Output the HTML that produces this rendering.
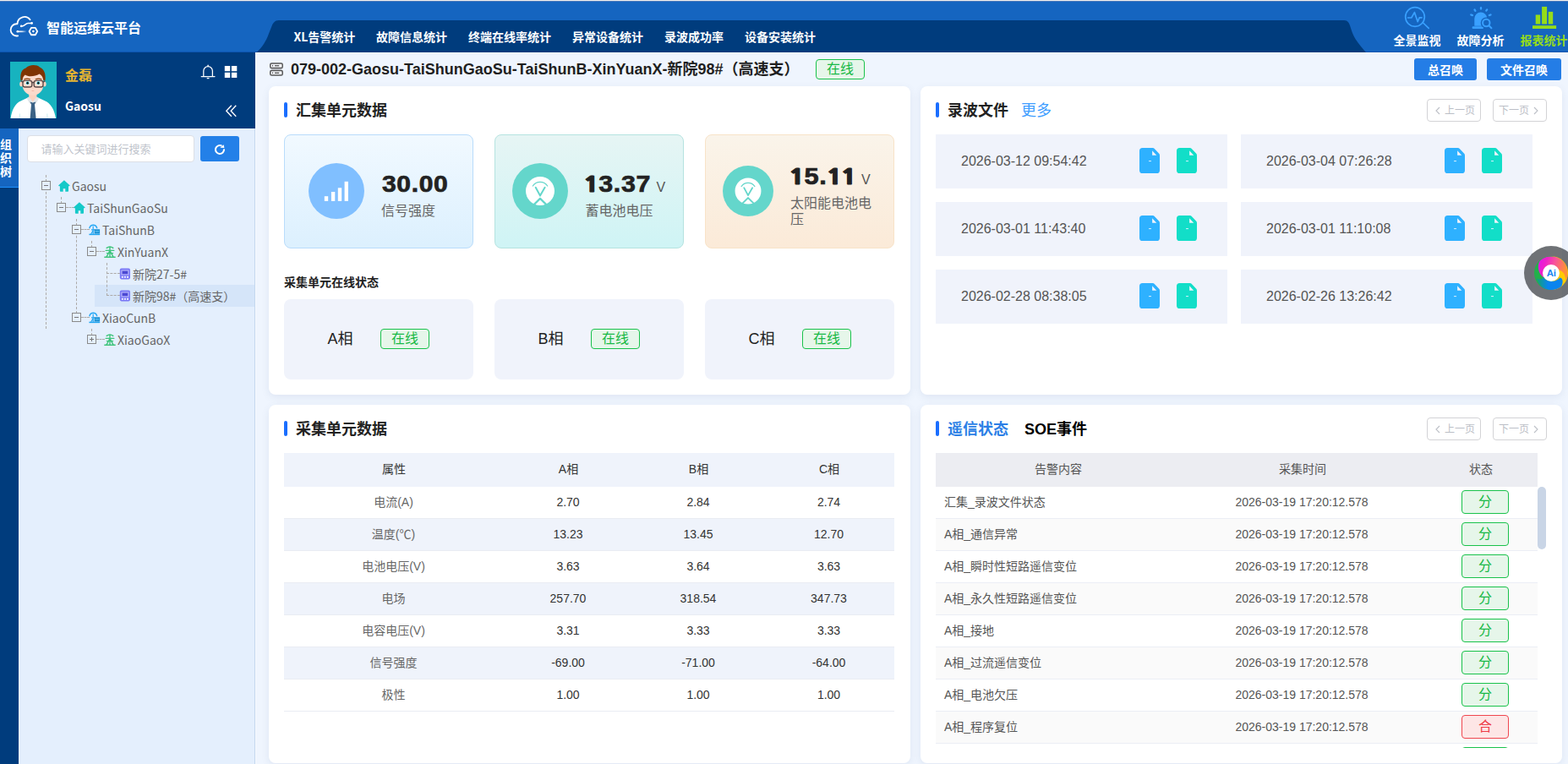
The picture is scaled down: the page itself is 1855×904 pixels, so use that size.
<!DOCTYPE html>
<html lang="zh-CN">
<head>
<meta charset="utf-8">
<title>智能运维云平台</title>
<style>
*{box-sizing:border-box;margin:0;padding:0}
html,body{width:1855px;height:904px;overflow:hidden}
body{position:relative;background:#eff5fe;font-family:"Liberation Sans","Noto Sans CJK SC",sans-serif;font-size:14px;color:#333}
.abs{position:absolute}
.cjk{font-family:"Noto Sans CJK SC","Liberation Sans",sans-serif}
.t{position:absolute;white-space:nowrap;line-height:20px;height:20px}
/* header */
#hdr{position:absolute;left:0;top:0;width:1855px;height:62px;background:#1565c0}
#hdr .topline{position:absolute;left:0;top:0;width:100%;height:2px;background:linear-gradient(#f4f2f0 0,#f4f2f0 1px,#6f93c6 1px,#2a62b0 2px)}
#hdr .botline{position:absolute;left:0;bottom:0;width:100%;height:1px;background:#0d55b0}
.nav{position:absolute;top:33px;height:20px;line-height:20px;font-weight:bold;font-size:14px;color:#fff;white-space:nowrap;font-family:"Noto Sans CJK SC","Liberation Sans",sans-serif}
.rnav{position:absolute;top:37px;height:20px;line-height:20px;font-weight:bold;font-size:14px;color:#fff;white-space:nowrap;width:56px;text-align:left;font-family:"Noto Sans CJK SC","Liberation Sans",sans-serif}
/* sidebar */
#user{position:absolute;left:0;top:62px;width:302px;height:90px;background:#003c7d}
#strip{position:absolute;left:0;top:152px;width:22px;height:752px;background:#003c7d}
#tab{position:absolute;left:0;top:152px;width:22px;height:70px;background:#1565c0;border-bottom:1px solid #1e90ff}
#tab span{position:absolute;left:0;margin-top:-2px;width:14px;text-align:center;font-weight:bold;font-size:14px;line-height:16px;color:#fff;font-family:"Noto Sans CJK SC",sans-serif}
#tree{position:absolute;left:22px;top:152px;width:280px;height:752px;background:#e4effd;border-right:1px solid #c4d7ee}
.tn{position:absolute;margin-top:-1px;height:20px;line-height:20px;font-size:14px;color:#666;white-space:nowrap;font-family:"Noto Sans CJK SC","Liberation Sans",sans-serif}
.bx{position:absolute;width:11px;height:11px;border:1px solid #8a8a8a;background:#e4effd}
.bx:before{content:"";position:absolute;left:2px;top:4px;width:5px;height:1px;background:#777}
.bx.plus:after{content:"";position:absolute;left:4px;top:2px;width:1px;height:5px;background:#777}
.vl{position:absolute;width:0;border-left:1px dashed #adaaa8}
.hl{position:absolute;height:0;border-top:1px dashed #adaaa8}
/* main */
#main{position:absolute;left:302px;top:62px;width:1553px;height:842px;background:#eff5fe;border-top:1px solid #fff;border-left:1px solid #f7faff}
.card{position:absolute;background:#fff;border-radius:8px;box-shadow:0 3px 10px rgba(90,110,155,.11)}
.bar{position:absolute;width:4px;height:18px;border-radius:2px;background:#1a6eff}
.ct{position:absolute;margin-top:1px;font-size:18px;font-weight:bold;line-height:26px;height:26px;color:#222;white-space:nowrap}
.tag{position:absolute;border:1px solid #19c24b;background:#e6f6ea;color:#19b946;border-radius:4px;text-align:center;white-space:nowrap}
.tag.red{border-color:#f0464f;background:#fde6e6;color:#ee3b45}
.btn{position:absolute;height:26px;line-height:26px;background:#247de6;color:#fff;font-weight:bold;font-size:14px;text-align:center;border-radius:3px;font-family:"Noto Sans CJK SC",sans-serif}
.pg{position:absolute;width:64px;height:27px;border:1px solid #d3d3d6;border-radius:4px;background:#fff;color:#bbbec6;font-size:12px;line-height:27px;white-space:nowrap}
.sc{position:absolute;width:224px;height:135px;border-radius:8px;border:1px solid}
.big{position:absolute;font-family:"Liberation Sans",sans-serif;font-weight:bold;font-size:27px;line-height:30px;height:30px;color:#222;white-space:nowrap;transform:scaleX(1.09);transform-origin:0 50%;-webkit-text-stroke:0.7px #222;letter-spacing:0.6px}
.big i{display:inline-block;width:15.3px;text-align:center;font-style:normal;font-family:"NanumGothic","Liberation Sans",sans-serif;font-weight:800;font-size:23.7px;line-height:30px;-webkit-text-stroke:1px #222;letter-spacing:0;transform:scaleX(1.22);vertical-align:baseline}
.unit{position:absolute;font-size:16px;line-height:20px;color:#555;font-family:"Liberation Sans",sans-serif}
.lab{position:absolute;font-size:16px;line-height:19px;color:#666}
.st{position:absolute;width:224px;height:95px;border-radius:8px;background:#f0f3fb}
.ph{position:absolute;font-size:18px;line-height:24px;height:24px;color:#222;white-space:nowrap}
.fr{position:absolute;width:345px;height:64px;background:#f0f3fb}
.fr .d{position:absolute;left:30px;top:21px;line-height:22px;height:22px;font-size:16px;color:#555;white-space:nowrap}
.fr svg{position:absolute;top:16px}
.th{position:absolute;height:40px;line-height:38px;font-size:14px;color:#333;text-align:center;white-space:nowrap}
.tr{position:absolute;height:38px;border-bottom:1px solid #e9ecf3}
.td{position:absolute;top:0;height:37px;line-height:37px;font-size:14px;text-align:center;white-space:nowrap;color:#333}
</style>
</head>
<body>
<div id="hdr">
  <div class="botline"></div>
  <svg class="abs" style="left:0;top:0" width="1855" height="62" viewBox="0 0 1855 62">
    <path d="M303 62 C307 59 311 54.5 315.2 46.4 C317 43 320 34.5 321.5 30.9 C323 27.4 325 24 329.8 24 L1590 24 C1594.5 24 1596.3 27.5 1597.3 31 C1598.5 35 1600.5 41 1602.6 44.5 C1605.5 49.5 1609.5 54.5 1616 62 Z" fill="#003c7d"/>
  </svg>
  <div class="topline"></div>
  <!-- logo -->
  <svg class="abs" style="left:5px;top:10px" width="50" height="45" viewBox="5 10 50 45" fill="none" stroke="#fff" stroke-width="1.8" stroke-linecap="round" stroke-linejoin="round">
    <defs><linearGradient id="lg1" x1="0" y1="0" x2="1" y2="0"><stop offset="0" stop-color="#fff"/><stop offset="0.5" stop-color="#fff" stop-opacity=".85"/><stop offset="1" stop-color="#fff" stop-opacity="0"/></linearGradient></defs>
    <path d="M20.6 27.6 A8.4 8.4 0 0 1 35.6 23.3"/>
    <path d="M20.4 28.3 A7.1 7.1 0 1 0 21.2 42.3"/>
    <path d="M25.2 30.9 C29 31.6 30 27.6 33 27.4 L37.6 27.4" stroke-width="1.5"/>
    <circle cx="25.2" cy="30.9" r="1.3" fill="#fff" stroke="none"/>
    <circle cx="37.6" cy="27.4" r="1.4" fill="#fff" stroke="none"/>
    <rect x="20.5" y="36.5" width="11" height="1.7" fill="url(#lg1)" stroke="none"/>
    <circle cx="20.8" cy="37.3" r="1.3" fill="#fff" stroke="none"/>
    <path d="M34.6 37.1 L37 32.9 L41.8 32.9 L44.2 37.1 L41.8 41.3 L37 41.3 Z" stroke-width="1.9"/>
    <circle cx="39.4" cy="37.1" r="1.3" fill="#fff" stroke="none"/>
  </svg>
  <div class="t cjk" style="left:55px;top:22px;font-size:16px;font-weight:bold;color:#fff">智能运维云平台</div>
  <!-- nav -->
  <div class="nav" style="left:347.5px">XL告警统计</div>
  <div class="nav" style="left:445px">故障信息统计</div>
  <div class="nav" style="left:554px">终端在线率统计</div>
  <div class="nav" style="left:677px">异常设备统计</div>
  <div class="nav" style="left:786px">录波成功率</div>
  <div class="nav" style="left:881px">设备安装统计</div>
  <!-- right icons -->
  <svg class="abs" style="left:1655px;top:2px" width="200" height="36" viewBox="1655 2 200 36">
    <g fill="none" stroke="#39a0ff" stroke-width="1.7" stroke-linecap="round" stroke-linejoin="round">
      <circle cx="1674" cy="20" r="11.3"/>
      <path d="M1683.6 27 L1690.2 33.4" stroke-width="1.7"/>
      <path d="M1665.6 21 L1669.8 21 L1673.4 14.6 L1677.2 25.6 L1679.2 20.8 L1682 20.8"/>
    </g>
    <g fill="#39a0ff">
      <path d="M1744.3 30.8 L1744.3 22 A7.5 7.5 0 0 1 1759.3 22 L1759.3 30.8 Z"/>
      <rect x="1741.6" y="31.2" width="13.4" height="2.9" rx="1"/>
      <g stroke="#39a0ff" stroke-width="2.3" stroke-linecap="round" fill="none">
        <path d="M1740.3 17.5 L1741.9 18.1"/><path d="M1744.5 11.5 L1745.4 12.8"/><path d="M1752 9.2 L1752 10.6"/><path d="M1759.2 11.4 L1758.3 12.6"/><path d="M1763.5 17.5 L1761.9 18.1"/>
      </g>
      <circle cx="1758.3" cy="27" r="6.6" fill="#1565c0"/>
      <circle cx="1758.3" cy="27" r="4.2" fill="none" stroke="#39a0ff" stroke-width="2"/>
      <path d="M1761.4 30.2 L1764.4 33.2" stroke="#39a0ff" stroke-width="2" stroke-linecap="round"/>
    </g>
    <g fill="#96dc19">
      <rect x="1813" y="30.2" width="28.1" height="3.8"/>
      <rect x="1816.7" y="17.5" width="5.5" height="11"/>
      <rect x="1824.1" y="7.9" width="6" height="20.6"/>
      <rect x="1831.8" y="13.9" width="5.4" height="14.6"/>
    </g>
  </svg>
  <div class="rnav" style="left:1648.5px">全景监视</div>
  <div class="rnav" style="left:1723.5px">故障分析</div>
  <div class="rnav" style="left:1798.5px;color:#96dc19">报表统计</div>
</div>
<div id="user">
  <svg class="abs" style="left:12px;top:11px" width="55" height="67" viewBox="0 0 55 67">
    <rect width="55" height="67" fill="#17b3bf"/>
    <!-- shirt -->
    <path d="M0.6 67 C2 57 6 49 13 46.2 L21 42.6 L33 42.6 L41 46.2 C48 49 52.5 57 54 67 Z" fill="#fff"/>
    <path d="M11.2 67 L11.4 61.5" stroke="#bfe9ec" stroke-width="0.8" fill="none"/>
    <path d="M44 67 L43.8 61.5" stroke="#bfe9ec" stroke-width="0.8" fill="none"/>
    <!-- neck -->
    <path d="M22.2 36 L31.4 36 L31.4 42.6 L26.8 48 L22.2 42.6 Z" fill="#fbd3c1"/>
    <!-- collar -->
    <path d="M19.6 43.2 L22.2 41.4 L26.8 47.6 L23.4 50 Z" fill="#e2e7ea"/>
    <path d="M34.2 43.2 L31.4 41.4 L26.8 47.6 L30.4 50 Z" fill="#e2e7ea"/>
    <!-- tie -->
    <path d="M23.4 47.4 L26.8 48.6 L30.4 47.4 L29 50.6 L30.6 67 L23.6 67 L25 50.6 Z" fill="#3b6286"/>
    <!-- ears -->
    <ellipse cx="13.2" cy="26.4" rx="2" ry="3" fill="#fbd3c1"/>
    <ellipse cx="40.6" cy="26.4" rx="2" ry="3" fill="#fbd3c1"/>
    <!-- face -->
    <path d="M14.6 13 L39.2 13 L39.2 28 C39.2 35 33 39.8 26.9 39.8 C20.8 39.8 14.6 35 14.6 28 Z" fill="#fcdacb"/>
    <!-- hair -->
    <path d="M12.6 22.8 C11.4 14 14 9 18.6 7.6 C22 3.4 31 2.8 35 6.4 C40 8.4 42.6 14 41.4 22.8 L39.2 21.6 C38.8 18.4 37.2 15.8 34.6 14.6 C29 17.8 21 18 17.8 15.4 C15.8 16.8 14.8 19 14.6 21.6 Z" fill="#7f3402"/>
    <!-- brows -->
    <path d="M16.6 21 C18.6 20 21.6 20 23.6 20.8" stroke="#8a3a08" stroke-width="1.1" fill="none" stroke-linecap="round"/>
    <path d="M30.2 20.8 C32.2 20 35.2 20 37.2 21" stroke="#8a3a08" stroke-width="1.1" fill="none" stroke-linecap="round"/>
    <!-- eyes -->
    <ellipse cx="20.5" cy="25.2" rx="2.7" ry="2.3" fill="#fff"/>
    <ellipse cx="33.4" cy="25.2" rx="2.7" ry="2.3" fill="#fff"/>
    <circle cx="20.6" cy="25.2" r="1.9" fill="#2fc3d6"/>
    <circle cx="33.3" cy="25.2" r="1.9" fill="#2fc3d6"/>
    <circle cx="20.6" cy="25.2" r="1.2" fill="#111"/>
    <circle cx="33.3" cy="25.2" r="1.2" fill="#111"/>
    <!-- glasses -->
    <g fill="none" stroke="#5c4a49" stroke-width="1.4">
      <rect x="15" y="22.4" width="10.8" height="7.6" rx="2.6"/>
      <rect x="28.2" y="22.4" width="10.8" height="7.6" rx="2.6"/>
      <path d="M25.8 25 C26.6 24.4 27.4 24.4 28.2 25"/>
      <path d="M15 24 L12.8 23.2"/><path d="M39 24 L41.2 23.2"/>
    </g>
    <!-- nose mouth -->
    <path d="M26.2 31.2 C26.6 31.6 27.2 31.6 27.6 31.2" stroke="#f0b8a4" stroke-width="0.7" fill="none"/>
    <path d="M25 34.2 C26 35.2 27.8 35.2 28.8 34.2 Z" fill="#eea693"/>
  </svg>
  <div class="t cjk" style="left:77px;top:15px;font-size:16px;font-weight:bold;color:#e6b430;line-height:22px;height:22px">金磊</div>
  <div class="t cjk" style="left:77px;top:53px;font-size:14px;font-weight:bold;color:#fff">Gaosu</div>
  <svg class="abs" style="left:236px;top:12px" width="48" height="22" viewBox="236 74 48 22">
    <g fill="none" stroke="#fff" stroke-width="1.25" stroke-linecap="round" stroke-linejoin="round">
      <path d="M240.8 90.4 L240.8 84 A5.3 5.3 0 0 1 251.4 84 L251.4 90.4"/>
      <path d="M238.2 90.5 L254 90.5"/>
      <path d="M246.1 77.2 L246.1 78.6"/>
      <path d="M245.2 92.7 L247 92.7"/>
    </g>
    <g fill="#fff"><rect x="265.8" y="78" width="6.4" height="6.2"/><rect x="273.9" y="78" width="6.4" height="6.2"/><rect x="265.8" y="85.8" width="6.4" height="6.2"/><rect x="273.9" y="85.8" width="6.4" height="6.2"/></g>
  </svg>
  <svg class="abs" style="left:264px;top:60px" width="20" height="18" viewBox="264 122 20 18">
    <g fill="none" stroke="#fff" stroke-width="1.35" stroke-linecap="square" stroke-linejoin="miter">
      <path d="M273.4 125.2 L267.8 131.2 L273.4 137.2"/>
      <path d="M278.8 125.2 L273.2 131.2 L278.8 137.2"/>
    </g>
  </svg>
</div>
<div id="strip"></div>
<div id="tab"><span style="top:12px">组</span><span style="top:28px">织</span><span style="top:44px">树</span></div>
<div id="tree">
  <!-- coordinates inside tree are page coords minus (22,152) -->
  <div class="abs" style="left:10px;top:8px;width:198px;height:32px;border:1px solid #dcdfe6;border-radius:4px;background:#fff"></div>
  <div class="abs cjk" style="left:26.5px;top:9px;height:30px;line-height:30px;font-size:13px;color:#c0c4cc;white-space:nowrap">请输入关键词进行搜索</div>
  <div class="abs" style="left:215px;top:9px;width:46px;height:30px;border-radius:3px;background:#2380e8"></div>
  <svg class="abs" style="left:230.9px;top:17.9px" width="14" height="14" viewBox="-7 -7 14 14"><path d="M4.96 -0.6 A5 5 0 1 1 2.5 -4.33" fill="none" stroke="#fff" stroke-width="2.05" stroke-linecap="butt"/><path d="M0.4 -2.3 L5.4 -2 L4.7 -5.7 Z" fill="#fff"/></svg>
  <div class="abs" style="left:90px;top:185px;width:189px;height:26px;background:#d5e5f9"></div>
  <!-- lines -->
  <div class="vl" style="left:32px;top:55px;height:182px"></div>
  <div class="vl" style="left:50px;top:81px;height:8px"></div>
  <div class="vl" style="left:68px;top:107px;height:112px"></div>
  <div class="vl" style="left:86px;top:133px;height:8px"></div>
  <div class="vl" style="left:86px;top:237px;height:8px"></div>
  <div class="vl" style="left:104px;top:159px;height:39px"></div>
  <div class="hl" style="left:56px;top:93px;width:10px"></div>
  <div class="hl" style="left:74px;top:119px;width:10px"></div>
  <div class="hl" style="left:92px;top:145px;width:10px"></div>
  <div class="hl" style="left:74px;top:223px;width:10px"></div>
  <div class="hl" style="left:92px;top:249px;width:10px"></div>
  <div class="hl" style="left:104px;top:171px;width:16px"></div>
  <div class="hl" style="left:104px;top:197px;width:16px"></div>
  <!-- boxes -->
  <div class="bx" style="left:27px;top:62px"></div>
  <div class="bx" style="left:45px;top:88px"></div>
  <div class="bx" style="left:63px;top:114px"></div>
  <div class="bx" style="left:81px;top:140px"></div>
  <div class="bx" style="left:63px;top:218px"></div>
  <div class="bx plus" style="left:81px;top:244px"></div>
  <!-- icons -->
  <svg class="abs" style="left:47px;top:61px" width="14" height="14" viewBox="0 0 14 14"><use href="#i-home"/></svg>
  <svg class="abs" style="left:65px;top:87px" width="14" height="14" viewBox="0 0 14 14"><use href="#i-home"/></svg>
  <svg class="abs" style="left:83px;top:113px" width="14" height="14" viewBox="0 0 14 14"><use href="#i-stn"/></svg>
  <svg class="abs" style="left:101px;top:139px" width="14" height="14" viewBox="0 0 14 14"><use href="#i-twr"/></svg>
  <svg class="abs" style="left:119px;top:165px" width="14" height="14" viewBox="0 0 14 14"><use href="#i-dev"/></svg>
  <svg class="abs" style="left:119px;top:191px" width="14" height="14" viewBox="0 0 14 14"><use href="#i-dev"/></svg>
  <svg class="abs" style="left:83px;top:217px" width="14" height="14" viewBox="0 0 14 14"><use href="#i-stn"/></svg>
  <svg class="abs" style="left:101px;top:243px" width="14" height="14" viewBox="0 0 14 14"><use href="#i-twr"/></svg>
  <!-- labels -->
  <div class="tn" style="left:63px;top:59px">Gaosu</div>
  <div class="tn" style="left:81px;top:85px">TaiShunGaoSu</div>
  <div class="tn" style="left:99px;top:111px">TaiShunB</div>
  <div class="tn" style="left:117px;top:137px">XinYuanX</div>
  <div class="tn" style="left:135px;top:163px">新院27-5#</div>
  <div class="tn" style="left:135px;top:189px">新院98#（高速支）</div>
  <div class="tn" style="left:99px;top:215px">XiaoCunB</div>
  <div class="tn" style="left:117px;top:241px">XiaoGaoX</div>
</div>
<svg width="0" height="0" style="position:absolute">
  <defs>
    <g id="i-home"><path d="M6.9 0.2 L13.5 6.3 Q13.9 7.2 12.8 7.2 L12 7.2 L12 13 Q12 13.8 11.2 13.8 L8.3 13.8 L8.3 10.2 L5.7 10.2 L5.7 13.8 L2.7 13.8 Q1.9 13.8 1.9 13 L1.9 7.2 L1 7.2 Q-0.1 7.2 0.3 6.3 Z" fill="#14c9c8"/></g>
    <g id="i-stn"><path d="M0.4 12.4 L13.2 12.4" stroke="#1fa5f2" stroke-width="1.5" fill="none"/><path d="M1 4.6 C1.6 2.4 3.4 1.2 5.3 1.2 C7.2 1.2 9 2.4 9.6 4.6" stroke="#29a9f5" stroke-width="1.6" fill="none" stroke-linecap="round"/><path d="M5.2 2.6 L5.2 12 M3 6.8 L7.4 6.8 M5.2 7.6 L2.6 12" stroke="#29a9f5" stroke-width="1.2" fill="none"/><rect x="6.6" y="6.3" width="6.5" height="5.2" fill="#1a8fd2"/><rect x="7.6" y="8.2" width="4.6" height="1.2" fill="#5fc4f7"/></g>
    <g id="i-twr"><path d="M3.2 2.4 C5.4 0.8 8.6 0.8 10.8 2.4 M2.2 5.4 L11.8 5.4 M3.4 8.6 L10.6 8.6 M0.8 13.2 L13.2 13.2 M7 1.6 L7 13 M7 5.6 L3 12.8 M7 5.6 L11 12.8" stroke="#3fc47c" stroke-width="1.4" fill="none" stroke-linecap="round"/></g>
    <g id="i-dev"><rect x="0.8" y="0.6" width="12.2" height="12.8" rx="1.8" fill="#7a78f6"/><rect x="2.2" y="2.2" width="9.4" height="6.4" rx="1.2" fill="#aeadf9"/><rect x="3.6" y="3.6" width="6.6" height="3.6" fill="#4b48d2"/><rect x="2.8" y="9.8" width="2" height="2" fill="#f0f0ff"/><rect x="5.9" y="9.8" width="2" height="2" fill="#f0f0ff"/><rect x="9" y="9.8" width="2" height="2" fill="#f0f0ff"/></g>
  </defs>
</svg>
<div id="main"></div>
<svg class="abs" style="left:317px;top:72px" width="20" height="20" viewBox="317 72 20 20">
<rect x="320.5" y="80" width="13" height="4" fill="#cfd3db"/>
<g fill="#f6f8fc" stroke="#555" stroke-width="1.5"><rect x="319.8" y="74.9" width="14.4" height="5.6" rx="1.6"/><rect x="319.8" y="83.5" width="14.4" height="5.6" rx="1.6"/></g>
<g fill="#555"><rect x="322" y="76.9" width="1.1" height="1.6"/><rect x="325" y="77.1" width="5.2" height="1.3"/><rect x="322" y="85.5" width="1.1" height="1.6"/><rect x="325" y="85.7" width="5.2" height="1.3"/></g>
</svg>
<div class="t" style="left:344px;top:69px;height:26px;line-height:26px;font-size:18px;font-weight:bold;color:#1f1f1f">079-002-Gaosu-TaiShunGaoSu-TaiShunB-XinYuanX-新院98#（高速支）</div>
<div class="tag" style="left:965px;top:70px;width:58px;height:24px;line-height:22px;font-size:16px">在线</div>
<div class="btn" style="left:1673px;top:69px;width:74px">总召唤</div>
<div class="btn" style="left:1759px;top:69px;width:88px">文件召唤</div>
<div class="card" style="left:318px;top:102px;width:759px;height:365px"></div>
<div class="card" style="left:1089px;top:102px;width:759px;height:365px"></div>
<div class="card" style="left:318px;top:479px;width:759px;height:424px"></div>
<div class="card" style="left:1089px;top:479px;width:759px;height:424px"></div>
<div class="bar" style="left:336px;top:121px"></div>
<div class="ct" style="left:350px;top:117px">汇集单元数据</div>
<div class="sc" style="left:336px;top:159px;border-color:#b9dcfb;background:linear-gradient(#f1f9ff,#dcf0fe)"></div>
<svg class="abs" style="left:365px;top:193px" width="66" height="66" viewBox="-33 -33 66 66"><circle r="33" fill="#80bfff"/><g fill="#fff"><rect x="-14.2" y="6.2" width="4.4" height="5.7"/><rect x="-6.1" y="1" width="4.4" height="10.9"/><rect x="1.8" y="-3.7" width="4.4" height="15.6"/><rect x="9.6" y="-11.2" width="4.3" height="23.1"/></g></svg>
<div class="big" style="left:451.5px;top:202.5px;transform:scaleX(1.11)">30.00</div>
<div class="lab" style="left:451px;top:240px">信号强度</div>
<div class="sc" style="left:585px;top:159px;border-color:#b5e3e0;background:linear-gradient(#e6f5f4,#cff4f5)"></div>
<svg class="abs" style="left:606px;top:193px" width="66" height="66" viewBox="-33 -33 66 66"><circle r="33" fill="#64d6cb"/><circle r="17" fill="#fff"/><g fill="none" stroke="#64d6cb" stroke-linecap="round" stroke-linejoin="round"><path d="M-8.7 -6 A10.6 10.6 0 0 1 8.7 -6" stroke-width="1.3"/><path d="M-5.3 -4.2 L0 5.6 L5.6 -4.2" stroke-width="2"/><path d="M-7.6 16.4 L0 8.9 L7.6 16.4" stroke-width="2.2"/></g></svg>
<div class="big" style="left:691px;top:202.5px;transform:scaleX(1.125)"><i>1</i>3.37</div>
<div class="unit" style="left:776.5px;top:212px">V</div>
<div class="lab" style="left:692.5px;top:240px">蓄电池电压</div>
<div class="sc" style="left:834px;top:159px;border-color:#f8e3c8;background:linear-gradient(#faf4ea,#fbead8)"></div>
<svg class="abs" style="left:855px;top:196px" width="60" height="60" viewBox="-33 -33 66 66"><circle r="33" fill="#64d6cb"/><circle r="17" fill="#fff"/><g fill="none" stroke="#64d6cb" stroke-linecap="round" stroke-linejoin="round"><path d="M-8.7 -6 A10.6 10.6 0 0 1 8.7 -6" stroke-width="1.3"/><path d="M-5.3 -4.2 L0 5.6 L5.6 -4.2" stroke-width="2"/><path d="M-7.6 16.4 L0 8.9 L7.6 16.4" stroke-width="2.2"/></g></svg>
<div class="big" style="left:933.5px;top:193.5px;transform:scaleX(1.14)"><i>1</i>5.<i>1</i><i>1</i></div>
<div class="unit" style="left:1019px;top:203px">V</div>
<div class="lab" style="left:935px;top:231px;width:96px">太阳能电池电压</div>
<div class="t" style="left:336px;top:324px;font-size:14px;font-weight:bold;color:#222">采集单元在线状态</div>
<div class="st" style="left:336px;top:354px"></div>
<div class="ph" style="left:387.5px;top:389px">A相</div>
<div class="tag" style="left:450px;top:389px;width:58px;height:24px;line-height:22px;font-size:16px">在线</div>
<div class="st" style="left:585px;top:354px"></div>
<div class="ph" style="left:636.5px;top:389px">B相</div>
<div class="tag" style="left:699px;top:389px;width:58px;height:24px;line-height:22px;font-size:16px">在线</div>
<div class="st" style="left:834px;top:354px"></div>
<div class="ph" style="left:885.5px;top:389px">C相</div>
<div class="tag" style="left:949px;top:389px;width:58px;height:24px;line-height:22px;font-size:16px">在线</div>
<div class="bar" style="left:1107px;top:121px"></div>
<div class="ct" style="left:1121px;top:117px">录波文件</div>
<div class="ct" style="left:1208px;top:117px;font-weight:normal;color:#409eff">更多</div>
<div class="pg" style="left:1688px;top:117px"><svg class="abs" style="left:8px;top:7px" width="8" height="12" viewBox="0 0 8 12"><path d="M6 2 L2 6 L6 10" fill="none" stroke="#bcbfc6" stroke-width="1.1"/></svg><span class="abs" style="left:20px;top:0">上一页</span></div>
<div class="pg" style="left:1766px;top:117px"><span class="abs" style="left:6px;top:0">下一页</span><svg class="abs" style="left:46px;top:7px" width="8" height="12" viewBox="0 0 8 12"><path d="M2 2 L6 6 L2 10" fill="none" stroke="#bcbfc6" stroke-width="1.1"/></svg></div>
<div class="fr" style="left:1107px;top:159px"><div class="d">2026-03-12 09:54:42</div><svg style="left:241px" width="24" height="30" viewBox="0 0 24 30"><path d="M3.6 0 L15.6 0 C16.6 0 17.2 0.4 17.8 1 L23 6.6 C23.7 7.3 24 8 24 9 L24 26.4 A3.6 3.6 0 0 1 20.4 30 L3.6 30 A3.6 3.6 0 0 1 0 26.4 L0 3.6 A3.6 3.6 0 0 1 3.6 0 Z" fill="#2eb1ff"/><path d="M15.1 3.2 L15.1 8.8 L20.3 8.8 Z" fill="#f0f3fb"/><rect x="11" y="15.1" width="3" height="1" fill="#d8f0ff"/></svg><svg style="left:285px" width="24" height="30" viewBox="0 0 24 30"><path d="M3.6 0 L15.6 0 C16.6 0 17.2 0.4 17.8 1 L23 6.6 C23.7 7.3 24 8 24 9 L24 26.4 A3.6 3.6 0 0 1 20.4 30 L3.6 30 A3.6 3.6 0 0 1 0 26.4 L0 3.6 A3.6 3.6 0 0 1 3.6 0 Z" fill="#12dec8"/><path d="M15.1 3.2 L15.1 8.8 L20.3 8.8 Z" fill="#f0f3fb"/><rect x="11" y="15.1" width="3" height="1" fill="#d8f0ff"/></svg></div>
<div class="fr" style="left:1468px;top:159px"><div class="d">2026-03-04 07:26:28</div><svg style="left:241px" width="24" height="30" viewBox="0 0 24 30"><path d="M3.6 0 L15.6 0 C16.6 0 17.2 0.4 17.8 1 L23 6.6 C23.7 7.3 24 8 24 9 L24 26.4 A3.6 3.6 0 0 1 20.4 30 L3.6 30 A3.6 3.6 0 0 1 0 26.4 L0 3.6 A3.6 3.6 0 0 1 3.6 0 Z" fill="#2eb1ff"/><path d="M15.1 3.2 L15.1 8.8 L20.3 8.8 Z" fill="#f0f3fb"/><rect x="11" y="15.1" width="3" height="1" fill="#d8f0ff"/></svg><svg style="left:285px" width="24" height="30" viewBox="0 0 24 30"><path d="M3.6 0 L15.6 0 C16.6 0 17.2 0.4 17.8 1 L23 6.6 C23.7 7.3 24 8 24 9 L24 26.4 A3.6 3.6 0 0 1 20.4 30 L3.6 30 A3.6 3.6 0 0 1 0 26.4 L0 3.6 A3.6 3.6 0 0 1 3.6 0 Z" fill="#12dec8"/><path d="M15.1 3.2 L15.1 8.8 L20.3 8.8 Z" fill="#f0f3fb"/><rect x="11" y="15.1" width="3" height="1" fill="#d8f0ff"/></svg></div>
<div class="fr" style="left:1107px;top:239px"><div class="d">2026-03-01 11:43:40</div><svg style="left:241px" width="24" height="30" viewBox="0 0 24 30"><path d="M3.6 0 L15.6 0 C16.6 0 17.2 0.4 17.8 1 L23 6.6 C23.7 7.3 24 8 24 9 L24 26.4 A3.6 3.6 0 0 1 20.4 30 L3.6 30 A3.6 3.6 0 0 1 0 26.4 L0 3.6 A3.6 3.6 0 0 1 3.6 0 Z" fill="#2eb1ff"/><path d="M15.1 3.2 L15.1 8.8 L20.3 8.8 Z" fill="#f0f3fb"/><rect x="11" y="15.1" width="3" height="1" fill="#d8f0ff"/></svg><svg style="left:285px" width="24" height="30" viewBox="0 0 24 30"><path d="M3.6 0 L15.6 0 C16.6 0 17.2 0.4 17.8 1 L23 6.6 C23.7 7.3 24 8 24 9 L24 26.4 A3.6 3.6 0 0 1 20.4 30 L3.6 30 A3.6 3.6 0 0 1 0 26.4 L0 3.6 A3.6 3.6 0 0 1 3.6 0 Z" fill="#12dec8"/><path d="M15.1 3.2 L15.1 8.8 L20.3 8.8 Z" fill="#f0f3fb"/><rect x="11" y="15.1" width="3" height="1" fill="#d8f0ff"/></svg></div>
<div class="fr" style="left:1468px;top:239px"><div class="d">2026-03-01 11:10:08</div><svg style="left:241px" width="24" height="30" viewBox="0 0 24 30"><path d="M3.6 0 L15.6 0 C16.6 0 17.2 0.4 17.8 1 L23 6.6 C23.7 7.3 24 8 24 9 L24 26.4 A3.6 3.6 0 0 1 20.4 30 L3.6 30 A3.6 3.6 0 0 1 0 26.4 L0 3.6 A3.6 3.6 0 0 1 3.6 0 Z" fill="#2eb1ff"/><path d="M15.1 3.2 L15.1 8.8 L20.3 8.8 Z" fill="#f0f3fb"/><rect x="11" y="15.1" width="3" height="1" fill="#d8f0ff"/></svg><svg style="left:285px" width="24" height="30" viewBox="0 0 24 30"><path d="M3.6 0 L15.6 0 C16.6 0 17.2 0.4 17.8 1 L23 6.6 C23.7 7.3 24 8 24 9 L24 26.4 A3.6 3.6 0 0 1 20.4 30 L3.6 30 A3.6 3.6 0 0 1 0 26.4 L0 3.6 A3.6 3.6 0 0 1 3.6 0 Z" fill="#12dec8"/><path d="M15.1 3.2 L15.1 8.8 L20.3 8.8 Z" fill="#f0f3fb"/><rect x="11" y="15.1" width="3" height="1" fill="#d8f0ff"/></svg></div>
<div class="fr" style="left:1107px;top:319px"><div class="d">2026-02-28 08:38:05</div><svg style="left:241px" width="24" height="30" viewBox="0 0 24 30"><path d="M3.6 0 L15.6 0 C16.6 0 17.2 0.4 17.8 1 L23 6.6 C23.7 7.3 24 8 24 9 L24 26.4 A3.6 3.6 0 0 1 20.4 30 L3.6 30 A3.6 3.6 0 0 1 0 26.4 L0 3.6 A3.6 3.6 0 0 1 3.6 0 Z" fill="#2eb1ff"/><path d="M15.1 3.2 L15.1 8.8 L20.3 8.8 Z" fill="#f0f3fb"/><rect x="11" y="15.1" width="3" height="1" fill="#d8f0ff"/></svg><svg style="left:285px" width="24" height="30" viewBox="0 0 24 30"><path d="M3.6 0 L15.6 0 C16.6 0 17.2 0.4 17.8 1 L23 6.6 C23.7 7.3 24 8 24 9 L24 26.4 A3.6 3.6 0 0 1 20.4 30 L3.6 30 A3.6 3.6 0 0 1 0 26.4 L0 3.6 A3.6 3.6 0 0 1 3.6 0 Z" fill="#12dec8"/><path d="M15.1 3.2 L15.1 8.8 L20.3 8.8 Z" fill="#f0f3fb"/><rect x="11" y="15.1" width="3" height="1" fill="#d8f0ff"/></svg></div>
<div class="fr" style="left:1468px;top:319px"><div class="d">2026-02-26 13:26:42</div><svg style="left:241px" width="24" height="30" viewBox="0 0 24 30"><path d="M3.6 0 L15.6 0 C16.6 0 17.2 0.4 17.8 1 L23 6.6 C23.7 7.3 24 8 24 9 L24 26.4 A3.6 3.6 0 0 1 20.4 30 L3.6 30 A3.6 3.6 0 0 1 0 26.4 L0 3.6 A3.6 3.6 0 0 1 3.6 0 Z" fill="#2eb1ff"/><path d="M15.1 3.2 L15.1 8.8 L20.3 8.8 Z" fill="#f0f3fb"/><rect x="11" y="15.1" width="3" height="1" fill="#d8f0ff"/></svg><svg style="left:285px" width="24" height="30" viewBox="0 0 24 30"><path d="M3.6 0 L15.6 0 C16.6 0 17.2 0.4 17.8 1 L23 6.6 C23.7 7.3 24 8 24 9 L24 26.4 A3.6 3.6 0 0 1 20.4 30 L3.6 30 A3.6 3.6 0 0 1 0 26.4 L0 3.6 A3.6 3.6 0 0 1 3.6 0 Z" fill="#12dec8"/><path d="M15.1 3.2 L15.1 8.8 L20.3 8.8 Z" fill="#f0f3fb"/><rect x="11" y="15.1" width="3" height="1" fill="#d8f0ff"/></svg></div>
<div class="bar" style="left:336px;top:498px"></div>
<div class="ct" style="left:350px;top:494px">采集单元数据</div>
<div class="abs" style="left:336px;top:536px;width:722px;height:40px;background:#eff3fb"></div>
<div class="th" style="left:336.5px;top:536px;width:259px">属性</div>
<div class="th" style="left:595.5px;top:536px;width:154px">A相</div>
<div class="th" style="left:749.5px;top:536px;width:154px">B相</div>
<div class="th" style="left:903.5px;top:536px;width:155px">C相</div>
<div class="tr" style="left:336px;top:576px;width:722px;background:#fff"><div class="td" style="left:0px;width:259px;color:#666">电流(A)</div><div class="td" style="left:259px;width:154px">2.70</div><div class="td" style="left:413px;width:154px">2.84</div><div class="td" style="left:567px;width:155px">2.74</div></div>
<div class="tr" style="left:336px;top:614px;width:722px;background:#eff3fb"><div class="td" style="left:0px;width:259px;color:#666">温度(℃)</div><div class="td" style="left:259px;width:154px">13.23</div><div class="td" style="left:413px;width:154px">13.45</div><div class="td" style="left:567px;width:155px">12.70</div></div>
<div class="tr" style="left:336px;top:652px;width:722px;background:#fff"><div class="td" style="left:0px;width:259px;color:#666">电池电压(V)</div><div class="td" style="left:259px;width:154px">3.63</div><div class="td" style="left:413px;width:154px">3.64</div><div class="td" style="left:567px;width:155px">3.63</div></div>
<div class="tr" style="left:336px;top:690px;width:722px;background:#eff3fb"><div class="td" style="left:0px;width:259px;color:#666">电场</div><div class="td" style="left:259px;width:154px">257.70</div><div class="td" style="left:413px;width:154px">318.54</div><div class="td" style="left:567px;width:155px">347.73</div></div>
<div class="tr" style="left:336px;top:728px;width:722px;background:#fff"><div class="td" style="left:0px;width:259px;color:#666">电容电压(V)</div><div class="td" style="left:259px;width:154px">3.31</div><div class="td" style="left:413px;width:154px">3.33</div><div class="td" style="left:567px;width:155px">3.33</div></div>
<div class="tr" style="left:336px;top:766px;width:722px;background:#eff3fb"><div class="td" style="left:0px;width:259px;color:#666">信号强度</div><div class="td" style="left:259px;width:154px">-69.00</div><div class="td" style="left:413px;width:154px">-71.00</div><div class="td" style="left:567px;width:155px">-64.00</div></div>
<div class="tr" style="left:336px;top:804px;width:722px;background:#fff"><div class="td" style="left:0px;width:259px;color:#666">极性</div><div class="td" style="left:259px;width:154px">1.00</div><div class="td" style="left:413px;width:154px">1.00</div><div class="td" style="left:567px;width:155px">1.00</div></div>
<div class="bar" style="left:1107px;top:498px"></div>
<div class="ct" style="left:1121px;top:494px;color:#2b7fe6">遥信状态</div>
<div class="ct" style="left:1212px;top:494px;color:#000">SOE事件</div>
<div class="pg" style="left:1688px;top:494px"><svg class="abs" style="left:8px;top:7px" width="8" height="12" viewBox="0 0 8 12"><path d="M6 2 L2 6 L6 10" fill="none" stroke="#bcbfc6" stroke-width="1.1"/></svg><span class="abs" style="left:20px;top:0">上一页</span></div>
<div class="pg" style="left:1766px;top:494px"><span class="abs" style="left:6px;top:0">下一页</span><svg class="abs" style="left:46px;top:7px" width="8" height="12" viewBox="0 0 8 12"><path d="M2 2 L6 6 L2 10" fill="none" stroke="#bcbfc6" stroke-width="1.1"/></svg></div>
<div class="abs" style="left:1107px;top:536px;width:712px;height:40px;background:#ecedf2"></div>
<div class="th" style="left:1202px;top:536px;width:100px;color:#555">告警内容</div>
<div class="th" style="left:1491px;top:536px;width:100px;color:#555">采集时间</div>
<div class="th" style="left:1702px;top:536px;width:100px;color:#555">状态</div>
<div class="abs" style="left:1107px;top:576px;width:722px;height:309px;overflow:hidden">
<div class="tr" style="left:0;top:0px;width:712px;background:#fff;border-bottom-color:#ebeef5"><div class="td" style="left:10px;text-align:left;color:#555">汇集_录波文件状态</div><div class="td" style="left:333px;width:200px;color:#555">2026-03-19 17:20:12.578</div><div class="tag" style="left:622px;top:4px;width:56px;height:28px;line-height:26px;font-size:16px">分</div></div>
<div class="tr" style="left:0;top:38px;width:712px;background:#fafafa;border-bottom-color:#ebeef5"><div class="td" style="left:10px;text-align:left;color:#555">A相_通信异常</div><div class="td" style="left:333px;width:200px;color:#555">2026-03-19 17:20:12.578</div><div class="tag" style="left:622px;top:4px;width:56px;height:28px;line-height:26px;font-size:16px">分</div></div>
<div class="tr" style="left:0;top:76px;width:712px;background:#fff;border-bottom-color:#ebeef5"><div class="td" style="left:10px;text-align:left;color:#555">A相_瞬时性短路遥信变位</div><div class="td" style="left:333px;width:200px;color:#555">2026-03-19 17:20:12.578</div><div class="tag" style="left:622px;top:4px;width:56px;height:28px;line-height:26px;font-size:16px">分</div></div>
<div class="tr" style="left:0;top:114px;width:712px;background:#fafafa;border-bottom-color:#ebeef5"><div class="td" style="left:10px;text-align:left;color:#555">A相_永久性短路遥信变位</div><div class="td" style="left:333px;width:200px;color:#555">2026-03-19 17:20:12.578</div><div class="tag" style="left:622px;top:4px;width:56px;height:28px;line-height:26px;font-size:16px">分</div></div>
<div class="tr" style="left:0;top:152px;width:712px;background:#fff;border-bottom-color:#ebeef5"><div class="td" style="left:10px;text-align:left;color:#555">A相_接地</div><div class="td" style="left:333px;width:200px;color:#555">2026-03-19 17:20:12.578</div><div class="tag" style="left:622px;top:4px;width:56px;height:28px;line-height:26px;font-size:16px">分</div></div>
<div class="tr" style="left:0;top:190px;width:712px;background:#fafafa;border-bottom-color:#ebeef5"><div class="td" style="left:10px;text-align:left;color:#555">A相_过流遥信变位</div><div class="td" style="left:333px;width:200px;color:#555">2026-03-19 17:20:12.578</div><div class="tag" style="left:622px;top:4px;width:56px;height:28px;line-height:26px;font-size:16px">分</div></div>
<div class="tr" style="left:0;top:228px;width:712px;background:#fff;border-bottom-color:#ebeef5"><div class="td" style="left:10px;text-align:left;color:#555">A相_电池欠压</div><div class="td" style="left:333px;width:200px;color:#555">2026-03-19 17:20:12.578</div><div class="tag" style="left:622px;top:4px;width:56px;height:28px;line-height:26px;font-size:16px">分</div></div>
<div class="tr" style="left:0;top:266px;width:712px;background:#fafafa;border-bottom-color:#ebeef5"><div class="td" style="left:10px;text-align:left;color:#555">A相_程序复位</div><div class="td" style="left:333px;width:200px;color:#555">2026-03-19 17:20:12.578</div><div class="tag red" style="left:622px;top:4px;width:56px;height:28px;line-height:26px;font-size:16px">合</div></div>
<div class="tr" style="left:0;top:304px;width:712px;background:#fff;border-bottom-color:#ebeef5"><div class="td" style="left:10px;text-align:left;color:#555">A相_装置重启</div><div class="td" style="left:333px;width:200px;color:#555">2026-03-19 17:20:12.578</div><div class="tag" style="left:622px;top:4px;width:56px;height:28px;line-height:26px;font-size:16px">分</div></div>
<div class="abs" style="left:712px;top:0;width:10px;height:74px;border-radius:5px;background:#c9d5e6"></div>
</div>
<div class="abs" style="left:1803px;top:291px;width:64px;height:64px;border-radius:32px;background:rgba(84,87,92,.84)"></div>
<svg class="abs" style="left:1815px;top:303px" width="40" height="40" viewBox="-20 -20 40 40">
<defs><clipPath id="aic"><circle r="20"/></clipPath>
<linearGradient id="aiA" x1="0" y1="0" x2="1" y2="0"><stop offset="0" stop-color="#22b04a"/><stop offset=".5" stop-color="#22b04a"/><stop offset=".62" stop-color="#ffc400"/><stop offset="1" stop-color="#ffcf00"/></linearGradient>
<linearGradient id="aiB" x1="0" y1="0" x2="1" y2="0.25"><stop offset="0" stop-color="#e012ec"/><stop offset=".3" stop-color="#ef22c8"/><stop offset=".6" stop-color="#f8559a"/><stop offset="1" stop-color="#ff8f38"/></linearGradient>
<linearGradient id="aiC" x1="0" y1="0" x2="1" y2="0"><stop offset="0" stop-color="#12a56c"/><stop offset=".45" stop-color="#0a84ee"/><stop offset="1" stop-color="#0a84ee"/></linearGradient></defs>
<g clip-path="url(#aic)"><rect x="-20" y="-20" width="40" height="40" fill="url(#aiA)"/>
<path d="M-13.5 -14 C-7 -22 10 -22 17 -10 C20 -4 20 4 17.5 9 C17 2 14 -3 8 -4 C2 -6 -6 -2 -9 5 C-15 1 -17 -8 -13.5 -14 Z" fill="url(#aiB)"/>
<path d="M-17.5 6 C-14 8 -11 8 -9 5 C-5 11 5 12 10.5 5.5 C14 6 14.5 11 12.5 15.5 C8 21 -2 21.5 -9 18 C-13 15 -16 11 -17.5 6 Z" fill="url(#aiC)"/>
</g>
<circle r="10" fill="#fff"/>
<text x="0.3" y="4" text-anchor="middle" font-family="Liberation Sans, sans-serif" font-weight="bold" font-size="11.5" letter-spacing="-0.3" fill="#1a86f0">Ai</text>
</svg>
</body></html>
